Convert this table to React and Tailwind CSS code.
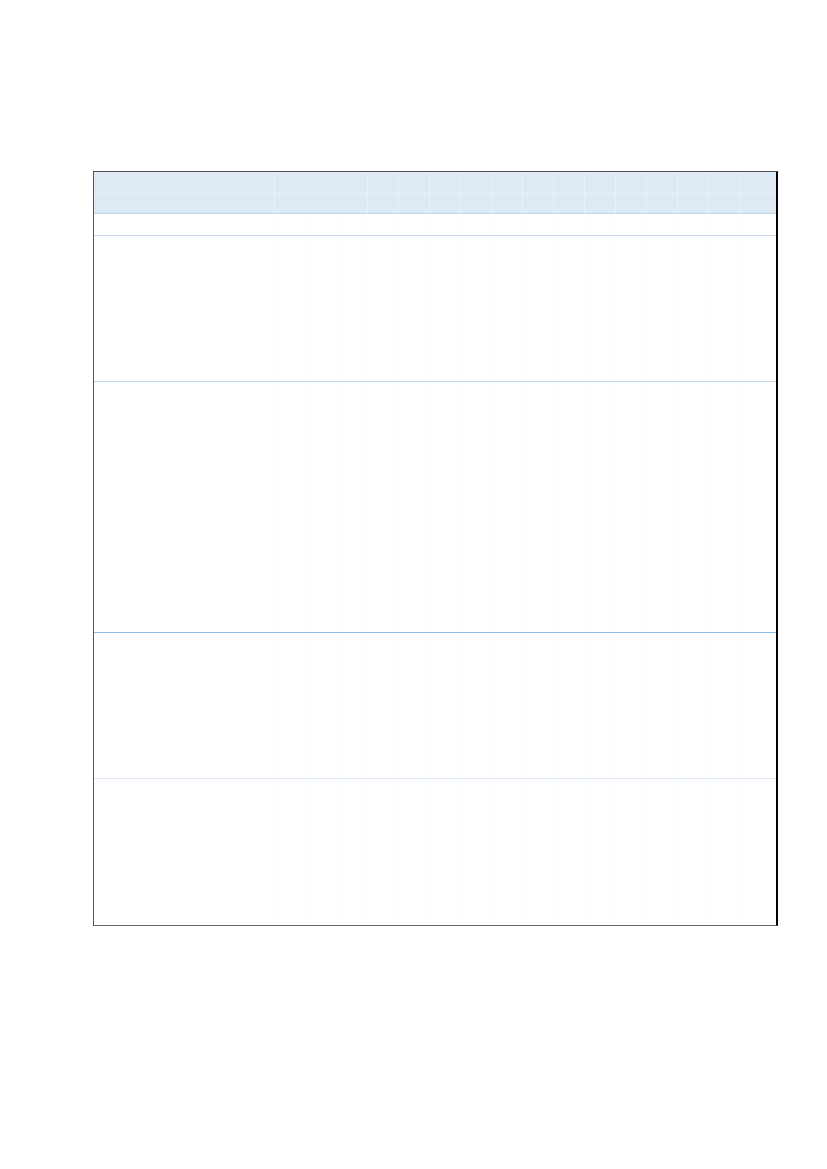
const cols = Array.from({ length: 17 });

// header has merged cells: no lines at the 2nd and 3rd narrow columns
const headerSkip = [1, 2];

const Row = ({ h, bg = 'bg-white', line, header }) => (
  <div className={`relative ${bg} ${line ? `border-b ${line}` : ''}`} style={{ height: h }}>
    <div className="grid h-full grid-cols-[181px_repeat(15,31px)_1fr]">
      {cols.map((_, i) => (
        <div
          key={i}
          className={
            i < 16 && !(header && headerSkip.includes(i))
              ? `border-r ${header ? 'border-[#e8f0f9]' : 'border-[#fcfdfe]'}`
              : ''
          }
        />
      ))}
    </div>
    {header && <div className="absolute left-0 right-0 top-[20px] border-t border-[#e6eef8]" />}
  </div>
);

export default function App() {
  return (
    <div className="w-[827px] h-[1169px] bg-white pt-[171px] pl-[93px] font-['Liberation_Sans',sans-serif]">
      <div className="w-[685px] border-t border-l border-b border-t-[#555] border-l-[#555] border-b-[#666] border-r-2 border-r-black">
        <Row h={42} bg="bg-[#dde9f5]" line="border-[#bcd4ec]" header />
        <Row h={22} line="border-[#c6d8ea]" />
        <Row h={146} line="border-[#c2d8ee]" />
        <Row h={251} line="border-[#8fbbe9]" />
        <Row h={146} line="border-[#d8e7f7]" />
        <Row h={146} />
      </div>
    </div>
  );
}
